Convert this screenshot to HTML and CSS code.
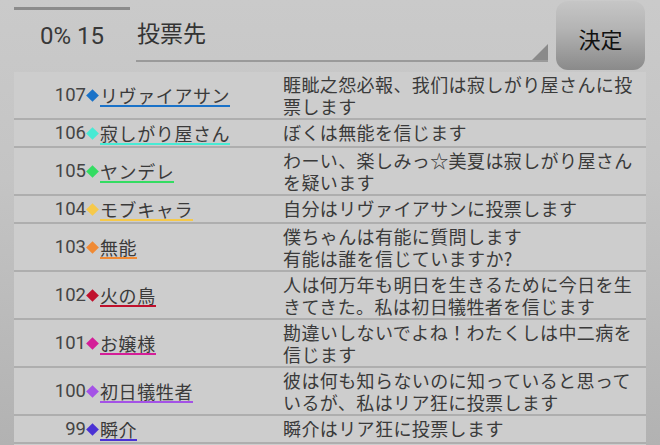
FILE: index.html
```html
<!DOCTYPE html>
<html lang="ja">
<head>
<meta charset="utf-8">
<link rel="stylesheet" href="styles.css">
</head>
<body>
<div class="screen">
  <header class="header">
    <div class="progress">
      <div class="progress-bar"></div>
      <div class="progress-text">0% 15</div>
    </div>
    <div class="spinner">
      <span class="spinner-label">投票先</span>
      <span class="spinner-corner"></span>
    </div>
    <button class="decide">決定</button>
  </header>
  <div class="list">
    <div class="row">
      <div class="who"><span class="num">107</span><span class="dia c107"></span><span class="name u107">リヴァイアサン</span></div>
      <div class="msg">睚眦之怨必報、我们は寂しがり屋さんに投票します</div>
    </div>
    <div class="row">
      <div class="who"><span class="num">106</span><span class="dia c106"></span><span class="name u106">寂しがり屋さん</span></div>
      <div class="msg">ぼくは無能を信じます</div>
    </div>
    <div class="row">
      <div class="who"><span class="num">105</span><span class="dia c105"></span><span class="name u105">ヤンデレ</span></div>
      <div class="msg">わーい、楽しみっ☆美夏は寂しがり屋さんを疑います</div>
    </div>
    <div class="row">
      <div class="who"><span class="num">104</span><span class="dia c104"></span><span class="name u104">モブキャラ</span></div>
      <div class="msg">自分はリヴァイアサンに投票します</div>
    </div>
    <div class="row">
      <div class="who"><span class="num">103</span><span class="dia c103"></span><span class="name u103">無能</span></div>
      <div class="msg">僕ちゃんは有能に質問します<br>有能は誰を信じていますか?</div>
    </div>
    <div class="row">
      <div class="who"><span class="num">102</span><span class="dia c102"></span><span class="name u102">火の鳥</span></div>
      <div class="msg">人は何万年も明日を生きるために今日を生きてきた。私は初日犠牲者を信じます</div>
    </div>
    <div class="row">
      <div class="who"><span class="num">101</span><span class="dia c101"></span><span class="name u101">お嬢様</span></div>
      <div class="msg">勘違いしないでよね！わたくしは中二病を信じます</div>
    </div>
    <div class="row">
      <div class="who"><span class="num">100</span><span class="dia c100"></span><span class="name u100">初日犠牲者</span></div>
      <div class="msg">彼は何も知らないのに知っていると思っているが、私はリア狂に投票します</div>
    </div>
    <div class="row">
      <div class="who"><span class="num">99</span><span class="dia c99"></span><span class="name u99">瞬介</span></div>
      <div class="msg">瞬介はリア狂に投票します</div>
    </div>
  </div>
</div>
</body>
</html>
```

FILE: styles.css
```css
* { box-sizing: border-box; }
html, body {
  margin: 0;
  padding: 0;
}
body {
  width: 660px;
  height: 445px;
  overflow: hidden;
  font-family: "Noto Sans CJK JP", "Noto Sans", sans-serif;
  color: #3a3a3a;
}
.screen {
  width: 660px;
  height: 445px;
  background: linear-gradient(to bottom, #cacaca 0%, #c4c4c4 40%, #b2b2b2 100%);
  display: flex;
  flex-direction: column;
}
.header {
  height: 72px;
  display: flex;
  align-items: stretch;
  padding-left: 14px;
  flex-shrink: 0;
}
.progress {
  width: 116px;
  padding-top: 7px;
  display: flex;
  flex-direction: column;
}
.progress-bar {
  height: 3px;
  background: #8c8c8c;
}
.progress-text {
  margin-top: 12px;
  text-align: center;
  font-family: Roboto, "Noto Sans", sans-serif;
  font-size: 24px;
  line-height: 28px;
  color: #383838;
}
.spinner {
  position: relative;
  margin-left: 6px;
  width: 412px;
  height: 62px;
  border-bottom: 2px solid #9a9a9a;
}
.spinner-label {
  display: block;
  margin-top: 16px;
  margin-left: 1px;
  font-size: 23px;
  line-height: 32px;
  color: #333;
}
.spinner-corner {
  position: absolute;
  right: 0;
  bottom: 0;
  width: 0;
  height: 0;
  border-left: 16px solid transparent;
  border-bottom: 16px solid #8a8a8a;
}
.decide {
  margin-left: 8px;
  margin-top: 1px;
  width: 89px;
  height: 69px;
  border: none;
  border-radius: 12px;
  background: linear-gradient(to bottom, #c6c6c6 0%, #b4b4b4 40%, #8a8a8a 100%);
  font-family: "Noto Sans CJK JP", sans-serif;
  font-size: 22px;
  color: #111;
  padding: 4px 0 0 0;
}
.list {
  margin-left: 14px;
  width: 632px;
  background: #cdcdcd;
  flex: 1;
}
.row {
  display: flex;
  border-bottom: 2px solid #aeaeae;
  padding: 1px 0;
}
.who {
  width: 269px;
  display: flex;
  align-items: center;
  font-size: 18px;
}
.num {
  width: 72px;
  text-align: right;
  font-family: Roboto, "Noto Sans", sans-serif;
  font-size: 18.5px;
  line-height: 22px;
  color: #444;
}
.dia {
  width: 9px;
  height: 9px;
  margin: 0 3px 0 2px;
  transform: rotate(45deg);
}
.name {
  font-size: 18px;
  line-height: 20px;
  padding-top: 2px;
  border-bottom: 2px solid;
  color: #3a3a3a;
  letter-spacing: 0.6px;
}
.msg {
  width: 356px;
  font-size: 18px;
  line-height: 22px;
  letter-spacing: 0.4px;
  color: #3a3a3a;
}
.c107 { background: #1a72c8; } .u107 { border-color: #1a72c8; }
.c106 { background: #48ead4; } .u106 { border-color: #48ead4; }
.c105 { background: #34dc62; } .u105 { border-color: #34dc62; }
.c104 { background: #f6c94a; } .u104 { border-color: #f6c94a; }
.c103 { background: #f08a34; } .u103 { border-color: #f08a34; }
.c102 { background: #c0102c; } .u102 { border-color: #c0102c; }
.c101 { background: #d41e98; } .u101 { border-color: #d41e98; }
.c100 { background: #a452e6; } .u100 { border-color: #a452e6; }
.c99 { background: #4a32d4; } .u99 { border-color: #4a32d4; }
```
